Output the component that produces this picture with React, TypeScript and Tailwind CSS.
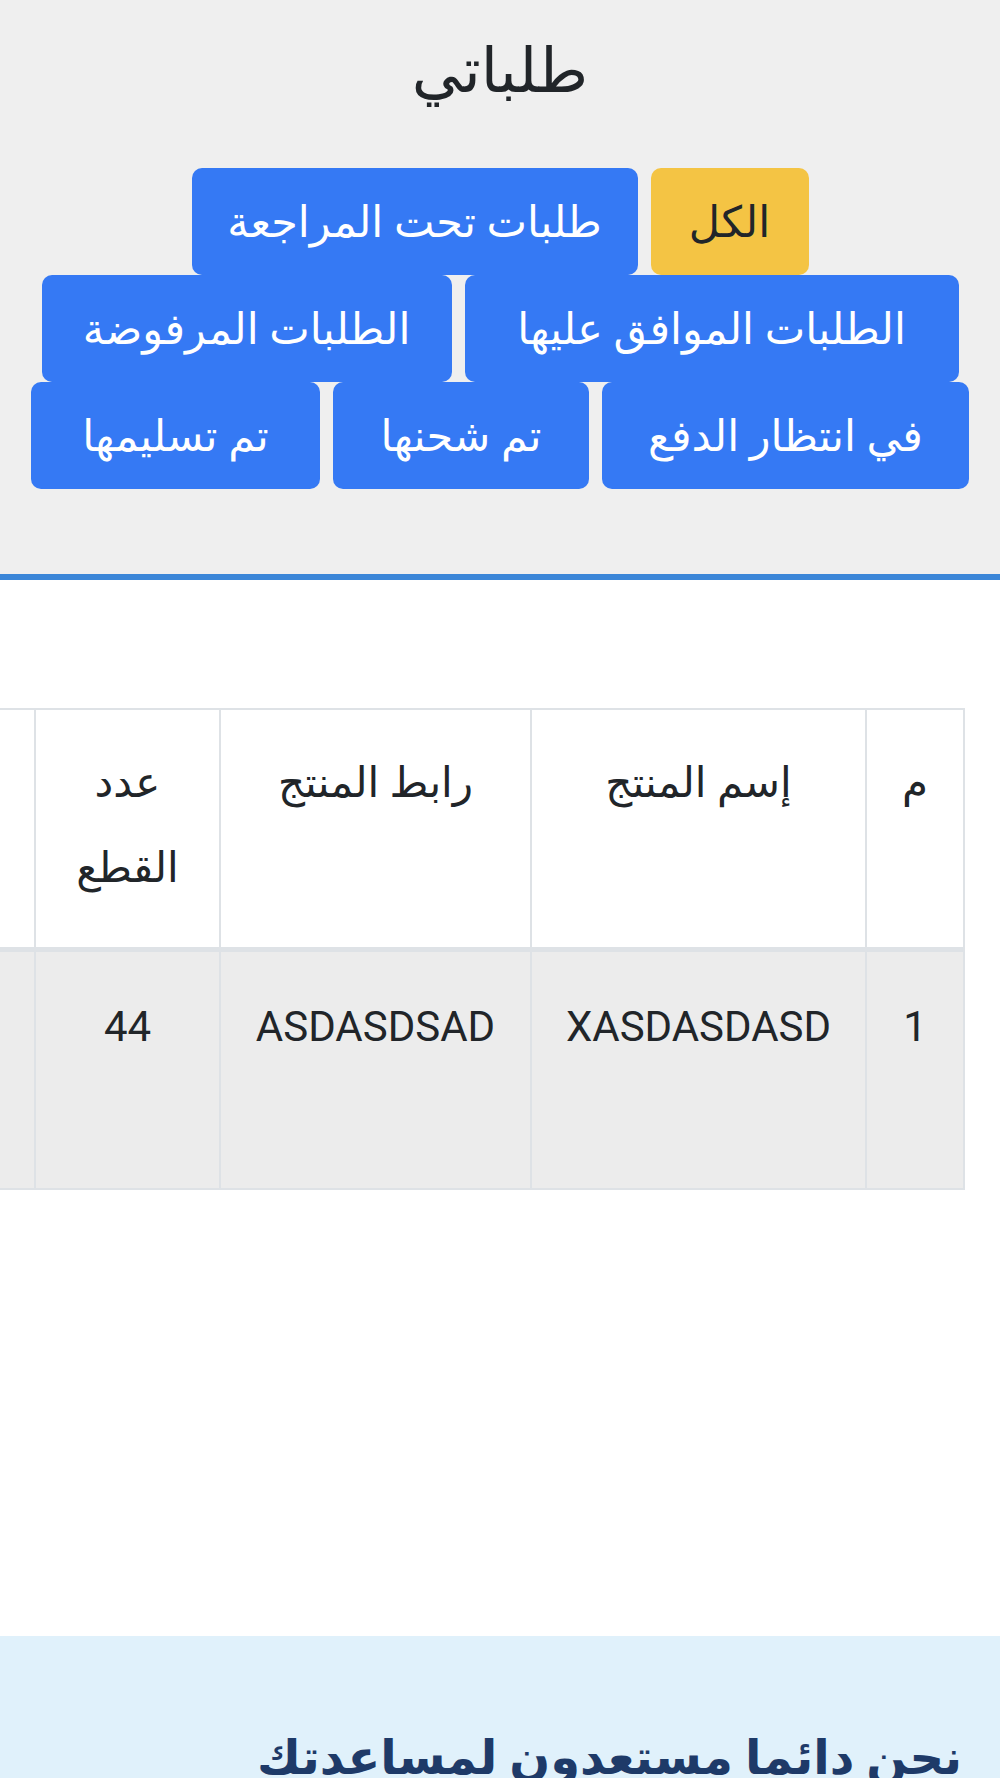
import React from 'react';

const filters = [
  { label: 'الكل', w: 'w-[158px]', active: true },
  { label: 'طلبات تحت المراجعة', w: 'w-[446px]' },
  { label: 'الطلبات الموافق عليها', w: 'w-[494px]' },
  { label: 'الطلبات المرفوضة', w: 'w-[410px]' },
  { label: 'في انتظار الدفع', w: 'w-[367px]' },
  { label: 'تم شحنها', w: 'w-[256px]' },
  { label: 'تم تسليمها', w: 'w-[289px]' },
];

// the last column runs past the left edge (scrolling table), so it has no visible text
const columns = [
  { label: 'م', w: 'w-[98px]' },
  { label: 'إسم المنتج', w: 'w-[335px]' },
  { label: 'رابط المنتج', w: 'w-[311px]' },
  { label: 'عدد القطع', w: 'w-[185px]' },
  { label: '', w: 'w-[300px]' },
];

const rows = [['1', 'XASDASDASD', 'ASDASDSAD', '44', '']];

export default function App() {
  return (
    <div
      dir="rtl"
      className="w-[1000px] h-[1778px] overflow-hidden bg-white text-[#212529]"
      style={{ fontFamily: 'Roboto, "DejaVu Sans", sans-serif' }}
    >
      {/* header with filters */}
      <section className="bg-[#efefef] border-b-[6px] border-[#3b86d8] pt-[30px] pb-[85px]">
        <h1 className="text-center text-[62px] leading-[82px] font-normal">طلباتي</h1>
        <div className="mt-[56px] px-[20px] flex flex-wrap justify-center gap-x-[13px]">
          {filters.map((f) => (
            <button
              key={f.label}
              className={`${f.w} h-[107px] rounded-[10px] text-[43px] leading-[60px] whitespace-nowrap ${
                f.active ? 'bg-[#f4c444] text-[#212529]' : 'bg-[#3579f4] text-white'
              }`}
            >
              {f.label}
            </button>
          ))}
        </div>
      </section>

      {/* orders table */}
      <div className="mt-[128px] pr-[35px] overflow-hidden">
        <table className="w-[1229px] table-fixed border-collapse text-[42px] leading-[85px]">
          <thead>
            <tr>
              {columns.map((c, i) => (
                <th
                  key={i}
                  className={`${c.w} h-[240px] align-top px-[30px] pt-[30px] pb-[30px] font-normal text-center border-2 border-b-[5px] border-[#dee2e6]`}
                >
                  {c.label}
                </th>
              ))}
            </tr>
          </thead>
          <tbody>
            {rows.map((r) => (
              <tr key={r[0]} className="bg-[#ececec]">
                {r.map((cell, i) => (
                  <td
                    key={i}
                    className="h-[240px] align-top px-[30px] pt-[32px] text-center border-2 border-[#dee2e6]"
                  >
                    {cell}
                  </td>
                ))}
              </tr>
            ))}
          </tbody>
        </table>
      </div>

      {/* help footer */}
      <footer className="mt-[446px] bg-[#e0f1fb] h-[400px] px-[38px] pt-[82px]">
        <h2 className="text-[48px] leading-[80px] font-bold text-[#1e3a68]">نحن دائما مستعدون لمساعدتك</h2>
      </footer>
    </div>
  );
}
